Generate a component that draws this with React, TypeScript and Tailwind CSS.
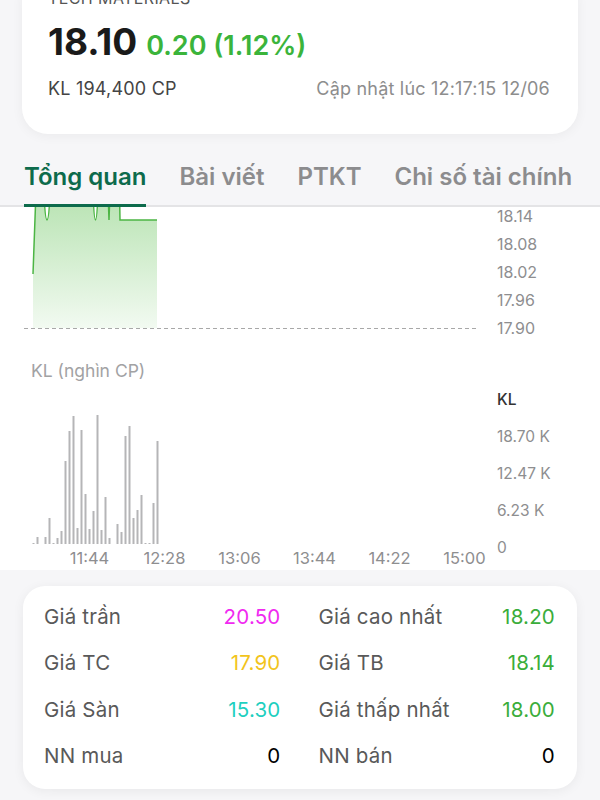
const priceLabels = ["18.14", "18.08", "18.02", "17.96", "17.90"];
const volLabels = ["18.70 K", "12.47 K", "6.23 K", "0"];
const times = ["11:44", "12:28", "13:06", "13:44", "14:22", "15:00"];

// bar heights in px, 4px apart starting at x=33
const bars = [
  1, 7, 0, 7, 26, 1, 6, 13, 83, 113, 128, 16, 114, 50, 15, 33, 129, 14, 47, 6,
  0, 20, 12, 108, 118, 26, 34, 49, 1, 1, 41, 103,
];

const stats = [
  ["Giá trần", "20.50", "text-[#f02af0]", "Giá cao nhất", "18.20", "text-[#3aad3a]"],
  ["Giá TC", "17.90", "text-[#f2c41c]", "Giá TB", "18.14", "text-[#3aad3a]"],
  ["Giá Sàn", "15.30", "text-[#1ecfbf]", "Giá thấp nhất", "18.00", "text-[#3aad3a]"],
  ["NN mua", "0", "text-black", "NN bán", "0", "text-black"],
];

const linePath =
  "M33 273 L36 190 L44 190 Q45 219 47 219 Q49 219 50 190 L93 190 Q94 219 95.5 219 Q97 219 98 190 L108 190 L109 219 L110 190 L119.5 190 L120 219 L157 219";

export default function App() {
  return (
    <div className="w-[600px] h-[800px] overflow-hidden bg-[#f6f6f8] font-['Inter','Noto_Sans',sans-serif]">
      {/* quote card */}
      <div className="mx-[22px] -mt-[24px] pt-[12px] pb-[33px] px-[26px] bg-white rounded-[26px] shadow-[0_2px_12px_rgba(0,0,0,0.05)]">
        <div className="text-[16px] leading-[20px] text-[#555] tracking-wide">TECH MATERIALS</div>
        <div className="mt-[14px] flex items-baseline gap-[9px] leading-[40px]">
          <span className="text-[37px] font-bold text-[#1a1a1a]">18.10</span>
          <span className="text-[27px] font-semibold text-[#3bb43b]">0.20 (1.12%)</span>
        </div>
        <div className="mt-[11px] flex justify-between text-[18px] leading-[24px] tracking-[0.2px]">
          <span className="text-[#444]">KL 194,400 CP</span>
          <span className="text-[#8d8d8d] pr-[2px]">Cập nhật lúc 12:17:15 12/06</span>
        </div>
      </div>

      {/* tabs */}
      <div className="mt-[27px] flex gap-[33px] px-[24px] border-b-2 border-[#e4e4e6] whitespace-nowrap text-[24px] leading-[32px] font-semibold">
        <div className="text-[#0d6b4c] pb-[9px] -mb-[2px] border-b-[3px] border-[#0d6b4c]">Tổng quan</div>
        <div className="text-[#8c8c8e] pb-[12px]">Bài viết</div>
        <div className="text-[#8c8c8e] pb-[12px]">PTKT</div>
        <div className="text-[#8c8c8e] pb-[12px]">Chỉ số tài chính</div>
      </div>

      {/* charts */}
      <div className="bg-white pb-[1px]">
        <div className="flex h-[134px]">
          <svg className="w-[497px] h-[134px] shrink-0" viewBox="0 206 497 134">
            <defs>
              <linearGradient id="area" x1="0" y1="0" x2="0" y2="1">
                <stop offset="0" stopColor="#5cbf4f" stopOpacity="0.45" />
                <stop offset="1" stopColor="#5cbf4f" stopOpacity="0.08" />
              </linearGradient>
            </defs>
            <path d={linePath + " L157 327 L33 327 Z"} fill="url(#area)" />
            <path d={linePath} fill="none" stroke="#4cb544" strokeWidth="1.5" />
            <line x1="24" y1="327.5" x2="478" y2="327.5" stroke="#a8a8a8" strokeWidth="1" strokeDasharray="4 3" />
          </svg>
          <div className="-mt-[5px] flex flex-col text-[16px] leading-[28px] text-[#8e8e90]">
            {priceLabels.map((p) => (
              <span key={p}>{p}</span>
            ))}
          </div>
        </div>

        <div className="mt-[19px] pl-[31px] text-[17.5px] leading-[22px] text-[#a2a2a4]">KL (nghìn CP)</div>

        <div className="flex">
          <div className="w-[497px] shrink-0">
            <svg className="w-[497px] h-[165px]" viewBox="0 380 497 165">
              {bars.map((h, i) =>
                h > 0 ? (
                  <rect key={i} x={32.5 + i * 4} y={542 - h} width="2" height={h} fill="#b5b5b7" />
                ) : null
              )}
            </svg>
            <div className="flex pl-[52px] text-[16.5px] leading-[22px] text-[#8e8e90] whitespace-nowrap">
              {times.map((t) => (
                <span key={t} className="w-[75px] shrink-0 text-center">
                  {t}
                </span>
              ))}
            </div>
          </div>
          <div className="pt-[7px] flex flex-col gap-[16px] text-[15.5px] leading-[21px] text-[#8e8e90] whitespace-nowrap">
            <span className="text-[#333] font-medium">KL</span>
            {volLabels.map((v) => (
              <span key={v}>{v}</span>
            ))}
          </div>
        </div>
      </div>

      {/* stats card */}
      <div className="mx-[23px] mt-[16px] pt-[8px] pb-[9px] pl-[21px] pr-[22px] bg-white rounded-[22px] shadow-[0_2px_12px_rgba(0,0,0,0.06)] grid grid-cols-2 gap-x-[38px] text-[20.5px] tracking-[0.2px]">
        {stats.map(([l1, v1, c1, l2, v2, c2]) => (
          <div key={l1} className="contents">
            <div className="h-[46.5px] flex items-center justify-between">
              <span className="text-[#595959]">{l1}</span>
              <span className={c1}>{v1}</span>
            </div>
            <div className="h-[46.5px] flex items-center justify-between">
              <span className="text-[#595959]">{l2}</span>
              <span className={c2}>{v2}</span>
            </div>
          </div>
        ))}
      </div>
    </div>
  );
}
